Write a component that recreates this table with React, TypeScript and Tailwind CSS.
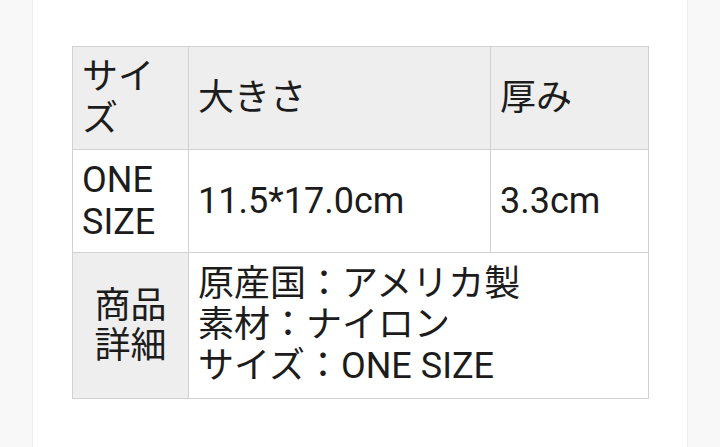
import React from "react";

export default function App() {
  const cell = "border border-[#d2d2d2] px-[9px] py-[9px] align-middle";
  return (
    <div className="min-h-[447px] w-full bg-[#f8f8f8] flex justify-center">
      <div
        className="w-[656px] min-h-[447px] bg-white border-l border-r border-[#efefef] px-[39px] pt-[46px] text-[#1c1c1c]"
        style={{ fontFamily: 'Roboto, "Noto Sans CJK JP", sans-serif' }}
      >
        <table className="w-[576px] border-collapse table-fixed text-[36px] leading-[42px]">
          <colgroup>
            <col className="w-[116px]" />
            <col className="w-[302px]" />
            <col className="w-[158px]" />
          </colgroup>
          <tbody>
            <tr className="bg-[#eeeeee]">
              <td className={cell}>サイズ</td>
              <td className={cell}>大きさ</td>
              <td className={cell}>厚み</td>
            </tr>
            <tr className="bg-white">
              <td className={cell}>ONE SIZE</td>
              <td className={cell}>11.5*17.0cm</td>
              <td className={cell}>3.3cm</td>
            </tr>
            <tr>
              <td className={`${cell} bg-[#eeeeee] text-center leading-[40px]`}>
                商品
                <br />
                詳細
              </td>
              <td colSpan={2} className={`${cell} bg-white leading-[41px] py-[11px]`}>
                原産国：アメリカ製
                <br />
                素材：ナイロン
                <br />
                サイズ：ONE SIZE
              </td>
            </tr>
          </tbody>
        </table>
      </div>
    </div>
  );
}
